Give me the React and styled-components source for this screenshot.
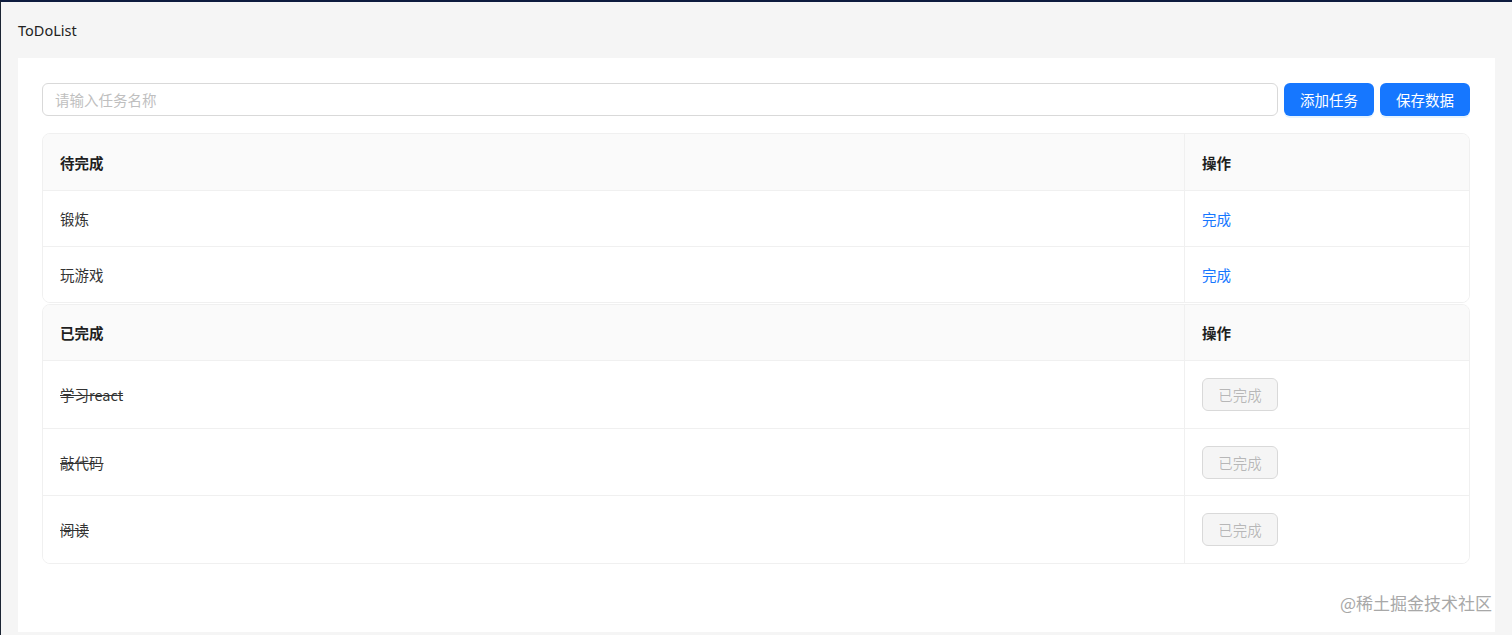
import styled, { createGlobalStyle } from 'styled-components'

const GlobalStyle = createGlobalStyle`
  html, body {
    margin: 0;
    padding: 0;
    background: #f5f5f5;
  }
  body {
    font-family: "Noto Sans", "Noto Sans CJK SC", sans-serif;
    color: rgba(0, 0, 0, 0.88);
  }
`

const Page = styled.div`
  box-sizing: border-box;
  width: 1512px;
  height: 635px;
  border-top: 2px solid #0d1b3e;
  border-left: 1px solid #1b2433;
  padding: 0 17px 3px 17px;
  display: flex;
  flex-direction: column;
  overflow: hidden;
`

const Title = styled.div`
  height: 56px;
  display: flex;
  align-items: center;
  font-size: 14.5px;
  color: #222;
`

const Card = styled.div`
  flex: 1;
  background: #fff;
  padding: 25px 25px 0 24px;
  display: flex;
  flex-direction: column;
`

const Toolbar = styled.div`
  display: flex;
  gap: 6px;
  height: 33px;
  margin-bottom: 17px;
`

const Input = styled.input`
  flex: 1;
  box-sizing: border-box;
  height: 33px;
  border: 1px solid #d9d9d9;
  border-radius: 6px;
  padding: 0 12px;
  font-family: "Noto Sans CJK SC", sans-serif;
  font-size: 14.5px;
  outline: none;
  &::placeholder {
    color: #bfbfbf;
  }
`

const PrimaryButton = styled.button`
  width: 90px;
  height: 33px;
  border: none;
  border-radius: 6px;
  background: #1677ff;
  color: #fff;
  font-family: "Noto Sans CJK SC", sans-serif;
  font-size: 14.5px;
  box-shadow: 0 2px 0 rgba(5, 145, 255, 0.1);
  cursor: pointer;
`

const Table = styled.div`
  border: 1px solid #f0f0f0;
  border-radius: 8px;
  overflow: hidden;
  margin-bottom: ${p => p.$gap || 0}px;
`

const Row = styled.div`
  display: grid;
  grid-template-columns: 1141px 1fr;
  height: ${p => p.$h}px;
  background: ${p => (p.$head ? '#fafafa' : '#fff')};
  border-top: ${p => (p.$first ? 'none' : '1px solid #f0f0f0')};
`

const Cell = styled.div`
  display: flex;
  align-items: center;
  padding: 0 17px;
  font-family: "Noto Sans CJK SC", sans-serif;
  font-size: 14.5px;
  font-weight: ${p => (p.$head ? 700 : 400)};
  color: ${p => (p.$head ? '#1f1f1f' : '#333')};
  text-decoration: ${p => (p.$done ? 'line-through' : 'none')};
  border-left: ${p => (p.$right ? '1px solid #f0f0f0' : 'none')};
`

const Link = styled.span`
  color: #1677ff;
  cursor: pointer;
`

const DisabledButton = styled.button`
  width: 76px;
  height: 33px;
  border: 1px solid #d9d9d9;
  border-radius: 6px;
  background: rgba(0, 0, 0, 0.04);
  color: rgba(0, 0, 0, 0.25);
  font-family: "Noto Sans CJK SC", sans-serif;
  font-size: 14.5px;
  cursor: not-allowed;
`

const Footer = styled.div`
  flex: 1;
  display: flex;
  justify-content: flex-end;
  align-items: center;
  padding-top: 8px;
  margin-right: -22px;
`

const Watermark = styled.span`
  font-family: "Noto Sans CJK SC", sans-serif;
  font-size: 17px;
  color: #a8a8a8;
`

const todo = ['锻炼', '玩游戏']
const done = ['学习react', '敲代码', '阅读']

export default function App() {
  return (
    <>
      <GlobalStyle />
      <Page>
        <Title>ToDoList</Title>
        <Card>
          <Toolbar>
            <Input placeholder="请输入任务名称" />
            <PrimaryButton>添加任务</PrimaryButton>
            <PrimaryButton>保存数据</PrimaryButton>
          </Toolbar>
          <Table $gap={1}>
            <Row $head $first $h={56}>
              <Cell $head>待完成</Cell>
              <Cell $head $right>操作</Cell>
            </Row>
            {todo.map(t => (
              <Row key={t} $h={55}>
                <Cell>{t}</Cell>
                <Cell $right><Link>完成</Link></Cell>
              </Row>
            ))}
          </Table>
          <Table>
            <Row $head $first $h={55}>
              <Cell $head>已完成</Cell>
              <Cell $head $right>操作</Cell>
            </Row>
            {done.map(t => (
              <Row key={t} $h={66.7}>
                <Cell $done>{t}</Cell>
                <Cell $right><DisabledButton disabled>已完成</DisabledButton></Cell>
              </Row>
            ))}
          </Table>
          <Footer>
            <Watermark>@稀土掘金技术社区</Watermark>
          </Footer>
        </Card>
      </Page>
    </>
  )
}
